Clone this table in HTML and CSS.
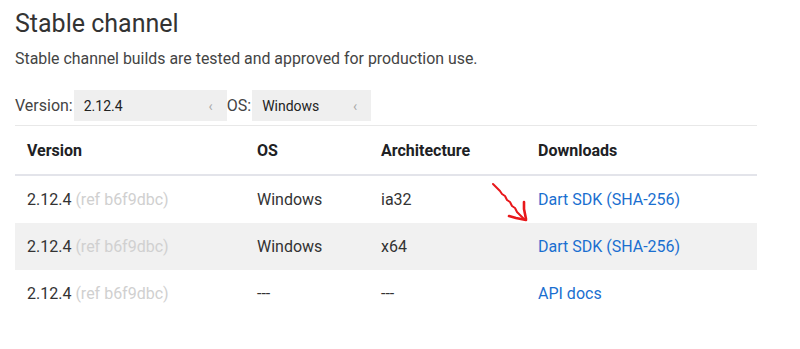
FILE: index.html
```html
<!DOCTYPE html>
<html lang="en">
<head>
  <meta charset="UTF-8" />
  <title>Stable channel</title>
  <link rel="stylesheet" href="styles.css">
</head>
<body>

<h2 class="title">Stable channel</h2>
<p class="intro">Stable channel builds are tested and approved for production use.</p>

<div class="filters">
  <label>Version:</label>
  <div class="select select-version"><span>2.12.4</span><span class="caret">&lsaquo;</span></div>
  <label>OS:</label>
  <div class="select select-os"><span>Windows</span><span class="caret">&lsaquo;</span></div>
</div>

<div class="table-wrap">
  <table class="builds">
    <thead>
      <tr>
        <th class="col-version">Version</th>
        <th class="col-os">OS</th>
        <th class="col-arch">Architecture</th>
        <th>Downloads</th>
      </tr>
    </thead>
    <tbody>
      <tr>
        <td>2.12.4 <span class="ref">(ref b6f9dbc)</span></td>
        <td>Windows</td>
        <td>ia32</td>
        <td><a href="#">Dart SDK (SHA-256)</a></td>
      </tr>
      <tr class="striped">
        <td>2.12.4 <span class="ref">(ref b6f9dbc)</span></td>
        <td>Windows</td>
        <td>x64</td>
        <td><a href="#">Dart SDK (SHA-256)</a></td>
      </tr>
      <tr>
        <td>2.12.4 <span class="ref">(ref b6f9dbc)</span></td>
        <td>---</td>
        <td>---</td>
        <td><a href="#">API docs</a></td>
      </tr>
    </tbody>
  </table>

  <!-- hand-drawn marker pointing at the x64 download -->
  <svg class="arrow" width="50" height="52" viewBox="0 0 50 52">
    <path d="M5 9 L9 13 L12 16 L14 19 L17 21 L19 25 L22 27 L24 31 L27 33 L29 37 L33 41 L37 45"
          fill="none" stroke="#e8181b" stroke-width="2" stroke-linecap="round" stroke-linejoin="round"/>
    <path d="M21 41 L28 43 L38 45 M38 44 L36 34 L36 27"
          fill="none" stroke="#e8181b" stroke-width="2.6" stroke-linecap="round" stroke-linejoin="round"/>
  </svg>
</div>

</body>
</html>
```

FILE: styles.css
```css
body {
  margin: 0;
  padding: 0 15px;
  font-family: Roboto, "Noto Sans", sans-serif;
  color: #3c4043;
  background: #fff;
}

.title {
  margin: 0;
  padding-top: 9px;
  font-size: 25px;
  font-weight: 400;
  line-height: 30px;
  color: #333;
}

.intro {
  margin: 10px 0 0;
  font-size: 15.9px;
  line-height: 20px;
  color: #444;
}

.filters {
  display: flex;
  align-items: center;
  margin-top: 21px;
  height: 31px;
  padding-bottom: 4px;
  border-bottom: 1px solid #e8e8e8;
  width: 742px;
  font-size: 16px;
  color: #444;
}

.select {
  display: flex;
  align-items: center;
  justify-content: space-between;
  height: 31px;
  padding: 0 14px 0 10px;
  box-sizing: border-box;
  background: #efefef;
  font-size: 14px;
  color: #222;
}

.select-version {
  width: 153px;
  margin-left: 1px;
}

.select-os {
  width: 119px;
  margin-left: 1px;
}

.caret {
  color: #aaa;
  font-size: 14px;
}

.table-wrap {
  position: relative;
  width: 742px;
}

.builds {
  width: 100%;
  border-collapse: collapse;
  font-size: 16px;
  color: #333;
}

.builds th {
  text-align: left;
  font-weight: 700;
  color: #202124;
  height: 48px;
  padding: 0 12px;
  border-bottom: 2px solid #e3e4ea;
}

.builds td {
  height: 47px;
  padding: 0 12px;
}

.col-version {
  width: 206px;
}

.col-os {
  width: 100px;
}

.col-arch {
  width: 133px;
}

.builds tr.striped td {
  background: #f1f1f1;
}

.ref {
  color: #d0d0d0;
}

.builds a {
  color: #1a6fd0;
  text-decoration: none;
}

.arrow {
  position: absolute;
  left: 473px;
  top: 49px;
}
```
